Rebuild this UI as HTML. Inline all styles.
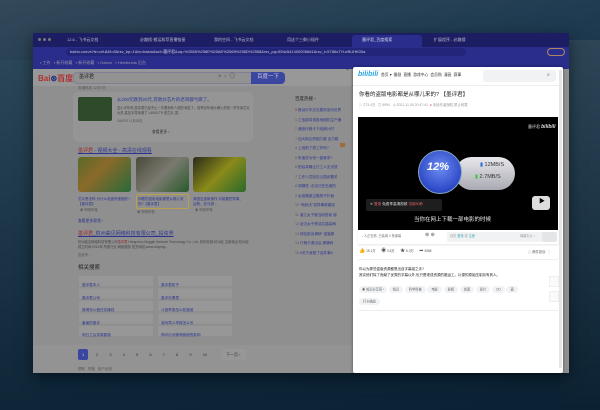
<!DOCTYPE html>
<html><head><meta charset="utf-8"><style>
*{margin:0;padding:0;box-sizing:border-box}
body{width:600px;height:410px;overflow:hidden;position:relative;font-family:"Liberation Sans","Noto Sans CJK SC",sans-serif;background:linear-gradient(170deg,#34495a 0%,#1d3a50 25%,#0f2a3e 55%,#0a2233 100%)}
.a{position:absolute}
.t{position:absolute;white-space:nowrap;line-height:1}
</style></head><body>
<div class="a" style="left:0;top:60px;width:40px;height:350px;background:linear-gradient(180deg,#2a4658,#0e2637)"></div>
<div class="a" style="left:560px;top:40px;width:40px;height:370px;background:linear-gradient(180deg,#2c4657,#0c2232)"></div>
<!-- window -->
<div class="a" style="left:33px;top:33px;width:536px;height:340px;background:#8f8f8f;box-shadow:0 4px 14px rgba(0,0,0,.5)"></div>
<!-- tab bar -->
<div class="a" style="left:33px;top:33px;width:536px;height:14px;background:#1c1d63"></div>
<div class="a" style="left:38px;top:38px;width:3px;height:3px;border-radius:50%;background:#777"></div>
<div class="a" style="left:43px;top:38px;width:3px;height:3px;border-radius:50%;background:#777"></div>
<div class="a" style="left:48px;top:38px;width:3px;height:3px;border-radius:50%;background:#777"></div>
<div class="t" style="left:67px;top:38px;font-size:4px;color:#bbc">12.6 - 飞书云文档</div>
<div class="t" style="left:140px;top:38px;font-size:4px;color:#bbc">必趣搜·搬运和荐直播链接</div>
<div class="t" style="left:214px;top:38px;font-size:4px;color:#bbc">我的空间 - 飞书云文档</div>
<div class="t" style="left:287px;top:38px;font-size:4px;color:#bbc">用这个三剩小插件</div>
<div class="a" style="left:352px;top:35px;width:70px;height:12px;background:#2a2d8c;border-radius:3px 3px 0 0"></div>
<div class="t" style="left:362px;top:38px;font-size:4px;color:#dde">墨评君_百度搜索</div>
<div class="t" style="left:434px;top:38px;font-size:4px;color:#bbc">扩展程序 - 必趣搜</div>
<!-- address bar -->
<div class="a" style="left:33px;top:47px;width:536px;height:22px;background:#2a2d8c"></div>
<div class="a" style="left:66px;top:48px;width:400px;height:8px;border-radius:4px;background:#23257a"></div>
<div class="t" style="left:70px;top:50px;font-size:4px;color:#ccd">baidu.com/s?ie=utf-8&amp;f=8&amp;rsv_bp=1&amp;tn=baidu&amp;wd=墨评君&amp;oq=%2565%258E%25AE%2565%258D%2558&amp;rsv_pq=894c5414000056d1&amp;rsv_t=5786s7YLeBUHK00a</div>
<div class="a" style="left:547px;top:48px;width:18px;height:8px;border-radius:4px;border:1px solid #a86"></div>
<div class="t" style="left:40px;top:61px;font-size:4px;color:#99a">▪ 工作 &nbsp; ▪ 新开收藏 &nbsp; ▪ 新开收藏 &nbsp; ▪ Gabon &nbsp; ▪ Hemiknots 后台</div>
<!-- baidu header -->
<div class="a" style="left:33px;top:69px;width:319px;height:17px;background:#989898"></div>
<div class="t" style="left:38px;top:75px;font-size:8px;font-weight:bold;color:#b03030">Bai<span style="color:#24307a">⊛</span><span style="color:#b03030">百度</span></div>
<div class="a" style="left:73px;top:72px;width:180px;height:12px;border:1px solid #7f7f9a;border-radius:4px 0 0 4px;background:#929292"></div>
<div class="t" style="left:79px;top:75px;font-size:5px;color:#222">墨评君</div>
<div class="t" style="left:218px;top:74px;font-size:6px;color:#555">× ♀ ◎</div>
<div class="a" style="left:251px;top:72px;width:34px;height:12px;background:#3a46a0;border-radius:0 4px 4px 0"></div>
<div class="t" style="left:257px;top:75px;font-size:5.5px;color:#ccd">百度一下</div>
<div class="t" style="left:346px;top:68px;font-size:5px;color:#333">×</div>
<!-- news card -->
<div class="t" style="left:78px;top:87px;font-size:3.5px;color:#555">风道科技 12月1日</div>
<div class="a" style="left:73px;top:92px;width:180px;height:50px;background:#959595;border-radius:5px"></div>
<div class="a" style="left:78px;top:97px;width:34px;height:24px;background:#2e4a2a;border-radius:2px"></div>
<div class="t" style="left:117px;top:98px;font-size:4.5px;color:#2b3590">从200元跌到20元,贷款炒芯片的老哥都亏麻了。</div>
<div class="t" style="left:117px;top:106px;font-size:3.3px;color:#444;line-height:5px;white-space:normal;width:133px">这小半年来,墨评君已经不止一次看到有人说的消息了。前率去年被炒爆火热的一些车用芯片大热,甚至半导体做了 L6060-TR 型芯片,虽...</div>
<div class="t" style="left:117px;top:120px;font-size:3.3px;color:#555">ZAKER 11月28日</div>
<div class="t" style="left:152px;top:131px;font-size:3.8px;color:#333">查看更多 ›</div>
<!-- video result -->
<div class="t" style="left:78px;top:149px;font-size:5px;color:#2b3590;text-decoration:underline"><span style="color:#9a2a2a">墨评君</span> - 视频大全 - 高清在线观看</div>
<div class="a" style="left:78px;top:157px;width:53px;height:35px;background:linear-gradient(135deg,#5a6a2a,#8a6a2a 40%,#2a6a3a);border-radius:3px"></div>
<div class="a" style="left:136px;top:157px;width:53px;height:35px;background:linear-gradient(135deg,#4a4a3a,#7a7a70 50%,#2a5a2a);border-radius:3px"></div>
<div class="a" style="left:193px;top:157px;width:53px;height:35px;background:linear-gradient(135deg,#2a2a1a,#8a8a1a 50%,#2a6a2a);border-radius:3px"></div>
<div class="t" style="left:78px;top:197px;font-size:3.5px;color:#2b3590;line-height:5px;white-space:normal;width:52px">芯片是怎样,为什么说盘贵被困的?【墨评君】</div>
<div class="a" style="left:136px;top:194px;width:53px;height:15px;border:1px solid #b8a050;border-radius:2px"></div>
<div class="t" style="left:138px;top:197px;font-size:3.5px;color:#2b3590;line-height:5px;white-space:normal;width:50px">你看的盗版电影都是从哪儿来的?【墨评君】</div>
<div class="t" style="left:193px;top:197px;font-size:3.5px;color:#2b3590;line-height:5px;white-space:normal;width:52px">美国这波新操作,可能要把苹果、谷歌、亚马逊...</div>
<div class="t" style="left:80px;top:209px;font-size:3.3px;color:#555">◉ 哔哩哔哩</div>
<div class="t" style="left:137px;top:211px;font-size:3.3px;color:#555">◉ 哔哩哔哩</div>
<div class="t" style="left:195px;top:209px;font-size:3.3px;color:#555">◉ 哔哩哔哩</div>
<div class="t" style="left:78px;top:220px;font-size:3.8px;color:#2b3590">查看更多视频 ›</div>
<div class="t" style="left:78px;top:232px;font-size:5px;color:#2b3590;text-decoration:underline"><span style="color:#9a2a2a">墨评君</span>_杭州曲见网络科技有限公司_投资界</div>
<div class="t" style="left:78px;top:240px;font-size:3.3px;color:#444;line-height:5px;white-space:normal;width:175px">杭州曲见网络科技有限公司<span style="color:#8a2a2a">墨评君</span> Hangzhou Muggle Network Technology Co., Ltd. 机构总部:杭州区 注册地点:杭州区 成立时间:2014年 所属行业:网络服务 官方网站:www.chaping...</div>
<div class="t" style="left:78px;top:254px;font-size:3.3px;color:#555">投资界 ◌</div>
<!-- related -->
<div class="t" style="left:78px;top:266px;font-size:5.5px;color:#222">相关搜索</div>
<div class="a" style="left:79px;top:276px;width:74px;height:60px;background:repeating-linear-gradient(180deg,#979797 0 10px,transparent 10px 12.5px)"></div>
<div class="a" style="left:158px;top:276px;width:74px;height:60px;background:repeating-linear-gradient(180deg,#979797 0 10px,transparent 10px 12.5px)"></div>
<div class="t" style="left:82px;top:279px;font-size:3.6px;color:#2b3590;line-height:12.5px">墨评君本人<br>墨评君公司<br>微博怎么做任务赚钱<br>羞羞的墨评<br>明日之后找周星驰</div>
<div class="t" style="left:161px;top:279px;font-size:3.6px;color:#2b3590;line-height:12.5px">墨评君知乎<br>墨评在哪里<br>斗音举报怎么知道谁<br>游戏骂人举报怎么写<br>神评论对微博营销的影响</div>
<!-- pagination -->
<div class="a" style="left:33px;top:345px;width:319px;height:28px;background:#939393"></div>
<div class="a" style="left:78px;top:349px;width:10px;height:11px;background:#3a46a0;border-radius:2px"></div>
<div class="t" style="left:82px;top:353px;font-size:4px;color:#ccd">1</div>
<div class="t" style="left:96px;top:353px;font-size:4px;color:#333;word-spacing:10px">2 3 4 5 6 7 8 9 10</div>
<div class="a" style="left:222px;top:349px;width:24px;height:11px;background:#979797;border-radius:2px"></div>
<div class="t" style="left:226px;top:353px;font-size:4px;color:#333">下一页 ›</div>
<div class="t" style="left:78px;top:368px;font-size:3.5px;color:#555">帮助 &nbsp; 举报 &nbsp; 用户反馈</div>
<!-- hot list -->
<div class="t" style="left:295px;top:97px;font-size:4.5px;color:#222">百度热搜 ›</div>
<div class="t" style="left:295px;top:106px;font-size:3.6px;color:#2b3590;line-height:9.5px"><span style="color:#9a2a2a">9</span> 推动中华文化更好走向世界<br><span style="color:#9a2a2a">1</span> 工信部将诱各地拥抗生产通<br><span style="color:#8a5a2a">2</span> 通信行程卡下线倒计时<br><span style="color:#8a6a2a">3</span> 加大助企纾困力度 全力稳<br><span style="color:#555">4</span> 上班前了算工作吗? <br><span style="color:#555">5</span> 布洛芬为何一盒难求?<br><span style="color:#555">6</span> 阳后将确让打工人无法快<br><span style="color:#555">7</span> 工作人员回应公园设置关<br><span style="color:#555">8</span> 胡锡进: 北京已在迅速的<br><span style="color:#555">9</span> 女孩路被过路男子扑倒<br><span style="color:#555">10</span> "地狱犬"变异毒株建设<br><span style="color:#555">11</span> 湛江女子被当街抢劫 超<br><span style="color:#555">12</span> 武汉女子称这共感染两<br><span style="color:#555">13</span> 网友投诉调研: 宝猫那<br><span style="color:#555">14</span> 行程卡退出后 健康码<br><span style="color:#555">15</span> #关于我阳了这件事#</div>
<div class="a" style="left:340px;top:143px;width:5px;height:4px;background:#a06a3a"></div>
<!-- bilibili panel -->
<div class="a" style="left:353px;top:67px;width:210px;height:306px;background:#fff;border-radius:2px;box-shadow:0 0 3px rgba(0,0,0,.4)"></div>
<div class="a" style="left:559px;top:70px;width:3px;height:298px;background:#e6e6e6"></div>
<div class="t" style="left:358px;top:71px;font-size:7px;font-weight:bold;color:#2ba5e0;font-style:italic">bilibili</div>
<div class="t" style="left:381px;top:74px;font-size:3.8px;color:#333">首页 ▾ &nbsp;番剧 &nbsp;直播 &nbsp;游戏中心 &nbsp;会员购 &nbsp;漫画 &nbsp;赛事</div>
<div class="a" style="left:483px;top:70px;width:73px;height:12px;background:#f1f2f3;border-radius:3px"></div>
<div class="t" style="left:547px;top:73px;font-size:5px;color:#555">⌕</div>
<div class="a" style="left:353px;top:85px;width:207px;height:1px;background:#eee"></div>
<div class="t" style="left:359px;top:93px;font-size:5.5px;color:#18191c">你看的盗版电影都是从哪儿来的? 【墨评君】</div>
<div class="t" style="left:359px;top:104px;font-size:3.4px;color:#9499a0">▷ 273.4万 &nbsp; ▤ 6994 &nbsp; ◷ 2021-11-05 20:47:41 &nbsp;<span style="color:#e55">●</span> 未经作者授权,禁止转载</div>
<div class="a" style="left:358px;top:117px;width:200px;height:113px;background:#000"></div>
<div class="t" style="left:528px;top:125px;font-size:4px;color:#ddd">墨评君 <b style="font-style:italic;font-size:5px">bilibili</b></div>
<div class="a" style="left:455px;top:157px;width:60px;height:33px;border-radius:17px;background:linear-gradient(180deg,#e8e8ec,#a9a9b2)"></div>
<div class="t" style="left:480px;top:163px;font-size:5.5px;color:#333"><span style="color:#2a6ae0">▮</span> 12MB/S</div>
<div class="t" style="left:475px;top:175px;font-size:5.5px;color:#333"><span style="color:#3c3">▮</span> 2.7MB/S</div>
<div class="a" style="left:418px;top:150px;width:44px;height:44px;border-radius:50%;background:radial-gradient(circle at 50% 40%,#6c8cf0,#2d49c8 70%,#1a2f9a);border:1px solid #8ab"></div>
<div class="t" style="left:427px;top:162px;font-size:11px;font-weight:bold;color:#fff;font-style:italic">12%</div>
<div class="a" style="left:366px;top:199px;width:76px;height:12px;background:#1e1e1e;border-radius:2px"></div>
<div class="t" style="left:370px;top:203px;font-size:3.6px;color:#ddd">✕ <span style="color:#e67">登录</span> 免费享高清视频 <span style="color:#e67">试用30秒</span></div>
<div class="a" style="left:532px;top:196px;width:18px;height:14px;border-radius:3px;background:#ddd"></div>
<div class="t" style="left:539px;top:199px;font-size:6px;color:#000">▶</div>
<div class="t" style="left:414px;top:218px;font-size:5.5px;color:#eee">当你在网上下载一部电影的时候</div>
<div class="a" style="left:358px;top:230px;width:200px;height:14px;background:#fff;box-shadow:0 1px 2px rgba(0,0,0,.1)"></div>
<div class="t" style="left:362px;top:235px;font-size:3.2px;color:#777">- 人正在看, 已装填 0 条弹幕</div>
<div class="t" style="left:425px;top:233px;font-size:5px;color:#555">⊛ ⊛</div>
<div class="a" style="left:447px;top:232px;width:110px;height:10px;background:#f1f2f3;border-radius:2px"></div>
<div class="t" style="left:450px;top:235px;font-size:3.2px;color:#999">请先 <span style="color:#3ab">登录</span> 或 <span style="color:#3ab">注册</span></div>
<div class="t" style="left:520px;top:235px;font-size:3.2px;color:#999">弹幕礼仪 ›</div>
<div class="a" style="left:542px;top:232px;width:15px;height:10px;background:#e3e5e7;border-radius:2px"></div>
<div class="t" style="left:359px;top:249px;font-size:5px;color:#555">👍<span style="font-size:3.2px"> 15.1万</span> &nbsp;&nbsp; ◉<span style="font-size:3.2px"> 3.6万</span> &nbsp;&nbsp; ★<span style="font-size:3.2px"> 6.3万</span> &nbsp;&nbsp; ➦<span style="font-size:3.2px"> 3568</span></div>
<div class="t" style="left:528px;top:251px;font-size:3.3px;color:#666">△ 稿件投诉 &nbsp;⋮</div>
<div class="a" style="left:358px;top:259px;width:200px;height:1px;background:#eee"></div>
<div class="t" style="left:359px;top:266px;font-size:3.5px;color:#222;line-height:6px">你以为那些盗版资源都是出自字幕组之手?<br>其实他们除了贡献了优秀的字幕以外,也只是现成资源的搬运工。片源的原始压制另有其人。</div>
<div class="a" style="left:549px;top:276px;width:10px;height:11px;border:1px solid #eee;background:#fafafa"></div>
<div class="a" style="left:549px;top:291px;width:10px;height:11px;border:1px solid #eee;background:#fafafa"></div>
<div class="t" style="left:359px;top:288px;font-size:3.2px;color:#61666d"><span style="background:#f1f2f3;padding:1.5px 3px;border-radius:4px">◉ 知识分享官 ›</span> &nbsp;<span style="background:#f1f2f3;padding:1.5px 4px;border-radius:4px">知识</span> &nbsp;<span style="background:#f1f2f3;padding:1.5px 4px;border-radius:4px">科学科普</span> &nbsp;<span style="background:#f1f2f3;padding:1.5px 4px;border-radius:4px">电影</span> &nbsp;<span style="background:#f1f2f3;padding:1.5px 4px;border-radius:4px">影视</span> &nbsp;<span style="background:#f1f2f3;padding:1.5px 4px;border-radius:4px">资源</span> &nbsp;<span style="background:#f1f2f3;padding:1.5px 4px;border-radius:4px">影片</span> &nbsp;<span style="background:#f1f2f3;padding:1.5px 4px;border-radius:4px">CD</span> &nbsp;<span style="background:#f1f2f3;padding:1.5px 4px;border-radius:4px">盗</span></div>
<div class="t" style="left:359px;top:300px;font-size:3.2px;color:#61666d"><span style="background:#f1f2f3;padding:1.5px 4px;border-radius:4px">打卡挑战</span></div>
<div class="a" style="left:358px;top:310px;width:200px;height:1px;background:#eee"></div>
</body></html>
